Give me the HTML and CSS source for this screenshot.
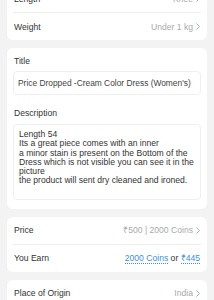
FILE: index.html
```html
<!DOCTYPE html>
<html>
<head>
<meta charset="utf-8">
<link rel="stylesheet" href="styles.css">
</head>
<body>
<div class="page">
  <section class="card">
    <div class="row"><span class="label">Length</span><span class="value">Knee <svg class="chev" viewBox="0 0 4 7"><polyline points="0.5,0.5 3.5,3.5 0.5,6.5"/></svg></span></div>
    <div class="row"><span class="label">Weight</span><span class="value">Under 1 kg <svg class="chev" viewBox="0 0 4 7"><polyline points="0.5,0.5 3.5,3.5 0.5,6.5"/></svg></span></div>
  </section>
  <section class="card fields">
    <div class="field-label">Title</div>
    <div class="box title-box">Price Dropped -Cream Color Dress (Women's)</div>
    <div class="field-label desc-label">Description</div>
    <div class="box desc-box">Length 54<br>Its a great piece comes with an inner<br>a minor stain is present on the Bottom of the Dress which is not visible you can see it in the picture<br>the product will sent dry cleaned and ironed.</div>
  </section>
  <section class="card">
    <div class="row"><span class="label">Price</span><span class="value">₹500 | 2000 Coins <svg class="chev" viewBox="0 0 4 7"><polyline points="0.5,0.5 3.5,3.5 0.5,6.5"/></svg></span></div>
    <div class="row"><span class="label">You Earn</span><span class="earn"><span class="link">2000 Coins</span> or <span class="link">₹445</span></span></div>
  </section>
  <section class="card">
    <div class="row"><span class="label">Place of Origin</span><span class="value">India <svg class="chev" viewBox="0 0 4 7"><polyline points="0.5,0.5 3.5,3.5 0.5,6.5"/></svg></span></div>
  </section>
</div>
</body>
</html>
```
FILE: styles.css
```css
html, body {
  margin: 0;
  padding: 0;
  background: #f3f3f3;
}
body {
  font-family: "Liberation Sans", Arial, sans-serif;
  font-size: 8.6px;
  color: #333;
  overflow: hidden;
}
.page {
  margin-top: -15px;
  padding: 0 7px;
  display: flex;
  flex-direction: column;
  gap: 8px;
}
.card {
  background: #fff;
  border-radius: 6px;
  padding: 0 6px;
}
.row {
  height: 27px;
  display: flex;
  align-items: center;
  justify-content: space-between;
  padding: 0 1px;
}
.row + .row {
  border-top: 1px solid #eeeeee;
}
.label {
  color: #333;
}
.value {
  color: #aaa;
  display: flex;
  align-items: center;
  gap: 3px;
}
.chev {
  width: 4px;
  height: 7px;
  fill: none;
  stroke: #aaa;
  stroke-width: 1;
}
.earn {
  color: #333;
}
.link {
  color: #3d8fe0;
  border-bottom: 1px dotted #3d8fe0;
}
.fields {
  padding: 7px 6px 9px;
}
.field-label {
  line-height: 12px;
  padding-left: 1px;
  margin-bottom: 4px;
}
.desc-label {
  margin-top: 12px;
  margin-bottom: 5px;
}
.box {
  border: 1px solid #efefef;
  border-radius: 4px;
  padding: 0 5px;
}
.title-box {
  height: 22px;
  display: flex;
  align-items: center;
  color: #444;
  white-space: nowrap;
  font-size: 8.4px;
  padding: 0 4px;
}
.desc-box {
  line-height: 9.3px;
  padding-top: 5px;
  padding-bottom: 13px;
  color: #333;
}
```
